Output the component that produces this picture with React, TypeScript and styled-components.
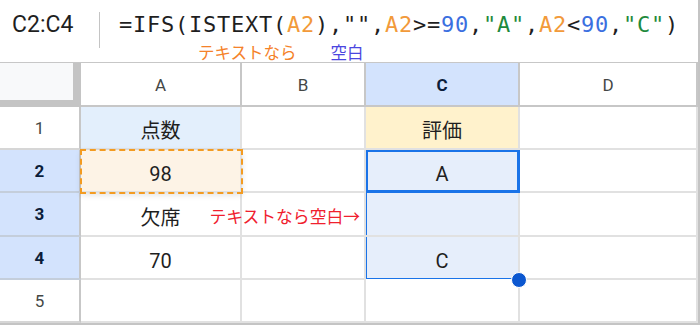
import React from 'react';
import styled, { createGlobalStyle } from 'styled-components';

const GlobalStyle = createGlobalStyle`
  html, body {
    margin: 0;
    padding: 0;
    background: #ffffff;
  }
  body {
    font-family: Roboto, "Noto Sans CJK JP", sans-serif;
  }
`;

const Sheet = styled.div`
  width: 700px;
  height: 325px;
  box-sizing: border-box;
  border-right: 2px solid #c4c4c4;
  border-bottom: 2px solid #c4c4c4;
  background: #ffffff;
  overflow: hidden;
`;

const FormulaBar = styled.div`
  display: flex;
  height: 63px;
  box-sizing: border-box;
  border-bottom: 1px solid #c7c7c7;
`;

const NameBox = styled.div`
  width: 100px;
  box-sizing: border-box;
  margin: 12px 0 14px;
  padding: 1px 0 0 12px;
  border-right: 1px solid #c4c4c4;
  font-family: Roboto, "Liberation Sans", sans-serif;
  font-size: 23px;
  line-height: 24px;
  color: #1f1f1f;
`;

const FormulaArea = styled.div`
  display: flex;
  flex-direction: column;
  padding: 12px 0 0 19px;
`;

const FormulaLine = styled.div`
  font-family: "DejaVu Sans Mono", "Liberation Mono", monospace;
  font-size: 22px;
  letter-spacing: 0.75px;
  line-height: 26px;
  color: #1f1f1f;
  white-space: pre;
`;

const Tok = styled.span<{ $kind: 'ref' | 'num' | 'str' }>`
  color: ${p => (p.$kind === 'ref' ? '#f29a3a' : p.$kind === 'num' ? '#3b6fe0' : '#1e8a3c')};
`;

const NoteLine = styled.div`
  display: flex;
  margin-top: 4px;
  font-family: "Noto Sans CJK JP", sans-serif;
  font-size: 16.5px;
  line-height: 20px;
`;

const Note = styled.span<{ $color: string; $left: number }>`
  color: ${p => p.$color};
  margin-left: ${p => p.$left}px;
`;

const Grid = styled.div`
  display: grid;
  grid-template-columns: 81px 161px 124px 154px 178px;
  grid-template-rows: 44px 43px 43px 44px 43px 43px;
`;

const Corner = styled.div`
  background: #f8f9fa;
  border-right: 8px solid #c4c4c4;
  border-bottom: 7px solid #c4c4c4;
`;

const ColHead = styled.div<{ $active?: boolean }>`
  display: flex;
  align-items: center;
  justify-content: center;
  padding-top: 2px;
  border-right: 2px solid #c7c7c7;
  border-bottom: 2px solid #c7c7c7;
  background: ${p => (p.$active ? '#d3e3fd' : '#ffffff')};
  color: ${p => (p.$active ? '#0b1d3a' : '#444746')};
  font-family: Roboto, "Liberation Sans", sans-serif;
  font-weight: ${p => (p.$active ? 700 : 400)};
  font-size: 17px;
`;

const RowHead = styled.div<{ $active?: boolean }>`
  display: flex;
  align-items: center;
  justify-content: center;
  border-right: 2px solid #c7c7c7;
  border-bottom: 2px solid ${p => (p.$active ? '#c4cedb' : '#d6d6d6')};
  background: ${p => (p.$active ? '#d3e3fd' : '#ffffff')};
  color: ${p => (p.$active ? '#0b1d3a' : '#444746')};
  font-family: Roboto, "Liberation Sans", sans-serif;
  font-weight: ${p => (p.$active ? 700 : 400)};
  font-size: 17px;
`;

type Sel = 'top' | 'mid' | 'bottom';

const selStyle = (s?: Sel) => {
  if (s === 'top') {
    return `
      border-right-color: #1a73e8;
      border-bottom-color: #1a73e8;
      box-shadow: inset 2px 2px 0 #1a73e8, inset -1px -1px 0 #1a73e8;
    `;
  }
  if (s === 'mid') {
    return `
      box-shadow: inset 1px 0 0 #1a73e8, 1px 0 0 #1a73e8;
    `;
  }
  if (s === 'bottom') {
    return `
      border-bottom-color: #1a73e8;
      border-bottom-width: 1px;
      margin-bottom: 1px;
      box-shadow: inset 1px 0 0 #1a73e8, 1px 0 0 #1a73e8;
    `;
  }
  return '';
};

const Cell = styled.div<{ $bg?: string; $sel?: Sel; $copy?: boolean }>`
  position: relative;
  display: flex;
  align-items: flex-end;
  justify-content: center;
  padding-bottom: 5px;
  border-right: 2px solid #e1e1e1;
  border-bottom: 2px solid #e1e1e1;
  background: ${p => p.$bg || '#ffffff'};
  font-family: Roboto, "Noto Sans CJK JP", sans-serif;
  font-size: 20px;
  line-height: 24px;
  color: #1f1f1f;
  white-space: nowrap;
  ${p => selStyle(p.$sel)}
  ${p => p.$copy && `
    outline: 2.5px dashed #f39b21;
    outline-offset: -1px;
    box-shadow: 0 2px 6px rgba(0, 0, 0, 0.12);
    z-index: 1;
  `}
`;

const OverflowNote = styled.span`
  position: absolute;
  right: 4px;
  bottom: 9px;
  color: #f0202e;
  font-family: "Noto Sans CJK JP", sans-serif;
  font-size: 16.8px;
  line-height: 20px;
`;

const FillHandle = styled.span`
  position: absolute;
  right: -9px;
  bottom: -10px;
  width: 14px;
  height: 14px;
  border-radius: 50%;
  background: #0b57d0;
  border: 1px solid #ffffff;
  z-index: 2;
`;

const App: React.FC = () => {
  return (
    <>
      <GlobalStyle />
      <Sheet>
        <FormulaBar>
          <NameBox>C2:C4</NameBox>
          <FormulaArea>
            <FormulaLine>
              =IFS(ISTEXT(<Tok $kind="ref">A2</Tok>),"",<Tok $kind="ref">A2</Tok>&gt;=<Tok $kind="num">90</Tok>,
              <Tok $kind="str">"A"</Tok>,<Tok $kind="ref">A2</Tok>&lt;<Tok $kind="num">90</Tok>,<Tok $kind="str">"C"</Tok>)
            </FormulaLine>
            <NoteLine>
              <Note $color="#f5822a" $left={79}>テキストなら</Note>
              <Note $color="#4b46e0" $left={34}>空白</Note>
            </NoteLine>
          </FormulaArea>
        </FormulaBar>

        <Grid>
          <Corner />
          <ColHead>A</ColHead>
          <ColHead>B</ColHead>
          <ColHead $active>C</ColHead>
          <ColHead>D</ColHead>

          <RowHead>1</RowHead>
          <Cell $bg="#e3effc">点数</Cell>
          <Cell />
          <Cell $bg="#fff2cc">評価</Cell>
          <Cell />

          <RowHead $active>2</RowHead>
          <Cell $bg="#fdf3e6" $copy>98</Cell>
          <Cell />
          <Cell $bg="#e6eefb" $sel="top">A</Cell>
          <Cell />

          <RowHead $active>3</RowHead>
          <Cell>欠席</Cell>
          <Cell>
            <OverflowNote>テキストなら空白→</OverflowNote>
          </Cell>
          <Cell $bg="#e6eefb" $sel="mid" />
          <Cell />

          <RowHead $active>4</RowHead>
          <Cell>70</Cell>
          <Cell />
          <Cell $bg="#e6eefb" $sel="bottom">
            C
            <FillHandle />
          </Cell>
          <Cell />

          <RowHead>5</RowHead>
          <Cell />
          <Cell />
          <Cell />
          <Cell />
        </Grid>
      </Sheet>
    </>
  );
};

export default App;
